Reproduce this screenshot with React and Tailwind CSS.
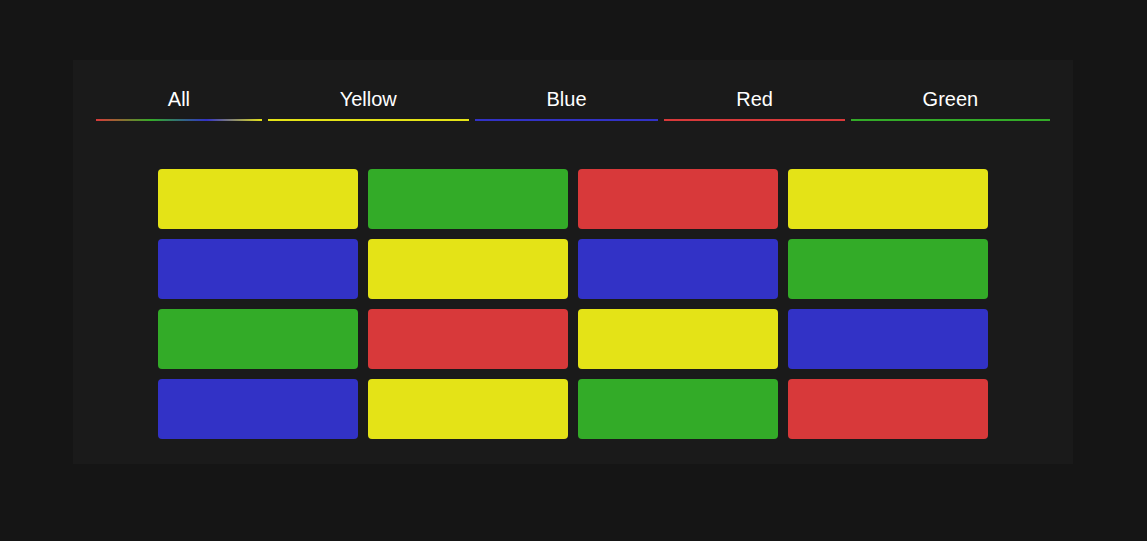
import React from 'react';

const tabs = [
  { label: 'All', line: 'bg-[linear-gradient(to_right,#d8393a,#33ab28,#3232c6,#e4e317)]' },
  { label: 'Yellow', line: 'bg-[#e4e317]' },
  { label: 'Blue', line: 'bg-[#3232c6]' },
  { label: 'Red', line: 'bg-[#d8393a]' },
  { label: 'Green', line: 'bg-[#33ab28]' },
];

const colors = {
  y: 'bg-[#e4e317]',
  g: 'bg-[#33ab28]',
  r: 'bg-[#d8393a]',
  b: 'bg-[#3232c6]',
};

const cards = ['y', 'g', 'r', 'y', 'b', 'y', 'b', 'g', 'g', 'r', 'y', 'b', 'b', 'y', 'g', 'r'];

export default function App() {
  return (
    <div className="min-h-screen bg-[#151515] pt-[60px] font-['Liberation_Sans',Arial,sans-serif]">
      <div className="ml-[73px] w-[1000px] bg-[#1a1a1a] px-[23px] pt-[26px] pb-[25px]">
        <div className="flex gap-[6px]">
          {tabs.map((t) => (
            <button key={t.label} className="flex-auto flex flex-col items-stretch text-white text-[20px] leading-[27px]">
              <span className="pb-[6px]">{t.label}</span>
              <span className={`h-[2px] ${t.line}`} />
            </button>
          ))}
        </div>
        <div className="mt-[48px] mx-auto grid w-[830px] grid-cols-4 gap-[10px]">
          {cards.map((c, i) => (
            <div key={i} className={`h-[60px] rounded-[4px] ${colors[c]}`} />
          ))}
        </div>
      </div>
    </div>
  );
}
